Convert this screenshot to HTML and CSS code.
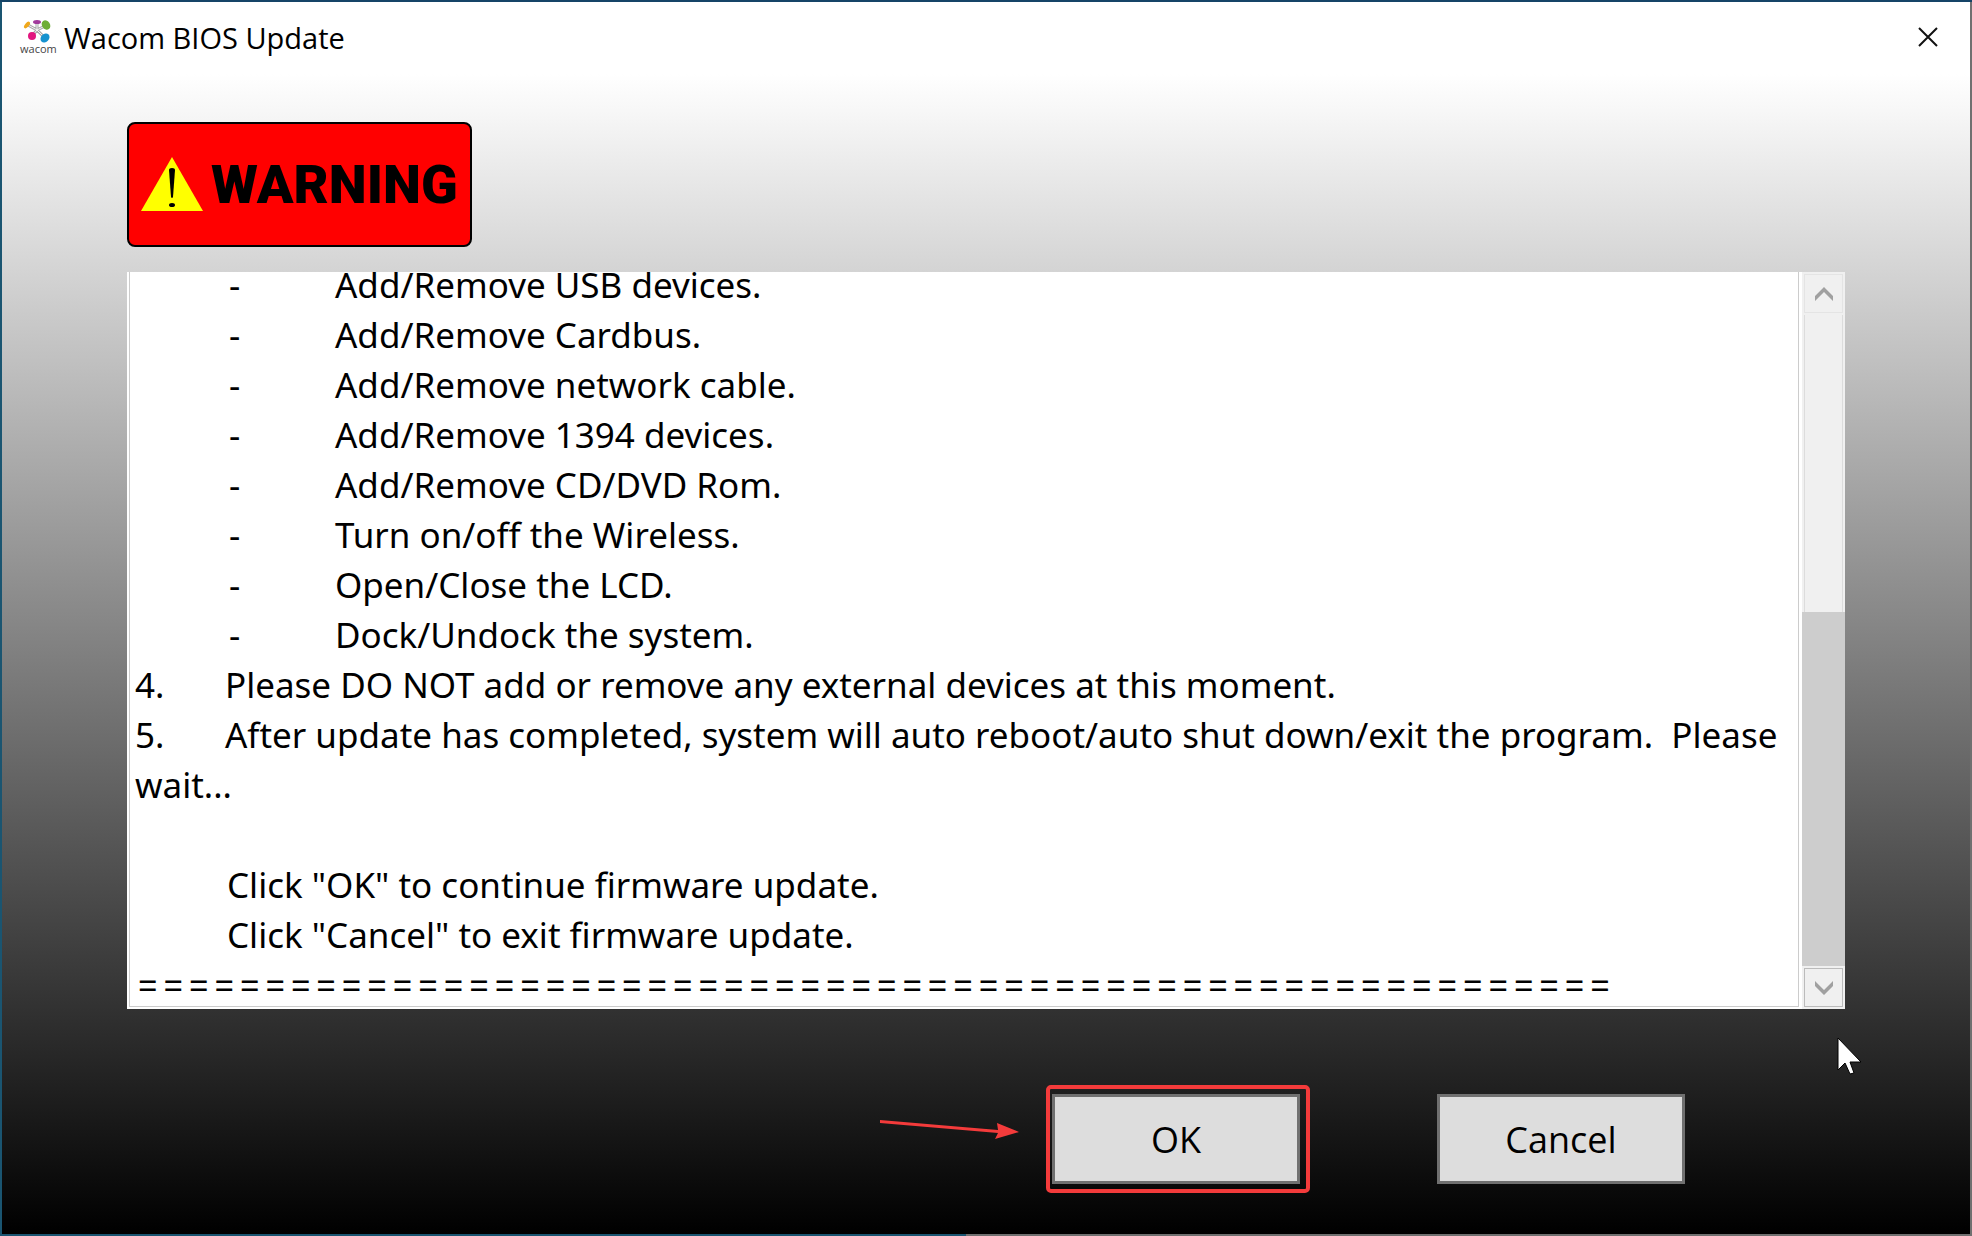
FILE: index.html
```html
<!DOCTYPE html>
<html lang="en">
<head>
  <meta charset="UTF-8">
  <meta name="viewport" content="width=device-width, initial-scale=1.0">
  <title>Wacom BIOS Update</title>
  <link rel="stylesheet" href="styles.css">
</head>
<body>
  <div class="window">
    <header class="title-bar">
      <svg class="logo" viewBox="0 0 36 36" aria-hidden="true">
        <g stroke="#a9a9a9" stroke-width="3" stroke-linecap="round">
          <path d="M17 11L8 6M17 11L17 4M17 11L25 7M17 11L12 17M17 11L24 18"/>
        </g>
        <g stroke="#f4f4f4" stroke-width="1" stroke-linecap="round">
          <path d="M17 11L8 6M17 11L17 4M17 11L25 7M17 11L12 17M17 11L24 18"/>
        </g>
        <ellipse cx="7" cy="6" rx="2" ry="4" transform="rotate(40 7 6)" fill="#f0a81c"/>
        <ellipse cx="17" cy="3" rx="4" ry="2" fill="#a13a9c"/>
        <ellipse cx="26" cy="6" rx="4" ry="5" transform="rotate(-35 26 6)" fill="#6fae35"/>
        <circle cx="12" cy="17" r="4" fill="#e2177f"/>
        <ellipse cx="25" cy="19" rx="4" ry="5" transform="rotate(45 25 19)" fill="#1592cf"/>
        <text x="0" y="34" class="logo-text">wacom</text>
      </svg>
      <h1>Wacom BIOS Update</h1>
      <button class="close" aria-label="Close">
        <svg viewBox="0 0 20 20"><path d="M1 1L19 19M19 1L1 19"/></svg>
      </button>
    </header>

    <main>
      <div class="warning">
        <svg viewBox="0 0 62 55" aria-hidden="true">
          <path d="M31 0L62 54H0Z" fill="#ff0"/>
          <path d="M28 13Q28 11 31 11T34 13L32 40Q31 42 30 40Z"/>
          <ellipse cx="31" cy="48" rx="3" ry="2"/>
        </svg>
        <strong>WARNING</strong>
      </div>

      <div class="notice">
        <div class="notice-text" tabindex="0">
          <ul>
            <li>Add/Remove USB devices.</li>
            <li>Add/Remove Cardbus.</li>
            <li>Add/Remove network cable.</li>
            <li>Add/Remove 1394 devices.</li>
            <li>Add/Remove CD/DVD Rom.</li>
            <li>Turn on/off the Wireless.</li>
            <li>Open/Close the LCD.</li>
            <li>Dock/Undock the system.</li>
          </ul>
          <p><span class="num">4.</span>Please DO NOT add or remove any external devices at this moment.</p>
          <p><span class="num">5.</span>After update has completed, system will auto reboot/auto shut down/exit the program.&nbsp; Please wait...</p>
          <p class="choices">Click "OK" to continue firmware update.<br>Click "Cancel" to exit firmware update.</p>
          <p class="rule">==========================================================</p>
        </div>
        <div class="scrollbar">
          <button aria-label="Scroll up"><svg viewBox="0 0 18 14"><path d="M0 14V9L9 0L18 9V14L9 5Z"/></svg></button>
          <div class="track"></div>
          <div class="thumb"></div>
          <button class="down" aria-label="Scroll down"><svg viewBox="0 0 18 14"><path d="M0 0V5L9 14L18 5V0L9 9Z"/></svg></button>
        </div>
      </div>

      <div class="actions">
        <div class="highlight">
          <button>OK</button>
          <svg class="arrow" viewBox="0 0 140 20" aria-hidden="true">
            <path d="M0 1L118 11L117 4L139 13L115 20L118 14L0 4Z"/>
          </svg>
        </div>
        <button>Cancel</button>
      </div>
    </main>
  </div>

  <svg class="cursor" viewBox="0 0 26 38" aria-hidden="true">
    <path d="M1 1V33L8 26L13 37L17 36L13 25H24Z"/>
  </svg>
</body>
</html>
```
FILE: styles.css
```css
* { box-sizing: border-box; }
body {
  margin: 0;
  padding: 0 2px 2px;
  height: 100vh;
  overflow: hidden;
  position: relative;
  font-family: "Noto Sans", "Open Sans", sans-serif;
  color: #000;
  border-top: 2px solid #154467;
  background: linear-gradient(to right, #1a5571 49%, #707070 49%);
}
.window {
  height: 100%;
  display: flex;
  flex-direction: column;
  background: linear-gradient(#fff 72px, #000);
}
.title-bar { display: flex; align-items: center; height: 70px; padding: 0 32px 0 18px; }
.logo { width: 36px; height: 36px; overflow: visible; }
.logo-text { font: 11px "Open Sans", sans-serif; fill: #444; }
h1 { flex: 1; margin: 0 0 0 8px; font: 29px "Open Sans", sans-serif; }
.close { padding: 0; border: none; background: none; }
.close svg { display: block; width: 20px; height: 20px; stroke: #111; stroke-width: 2; fill: none; }

main { flex: 1; min-height: 0; display: flex; flex-direction: column; padding: 50px 125px 41px; }
.warning {
  align-self: flex-start;
  display: flex;
  align-items: center;
  gap: 8px;
  width: 345px;
  height: 125px;
  padding: 0 12px;
  border: 2px solid #000;
  border-radius: 8px;
  background: #f00;
}
.warning svg { width: 62px; height: 55px; flex: none; }
.warning strong { font: 900 54px Roboto, "Liberation Sans", sans-serif; }

.notice { flex: 1; min-height: 0; display: flex; margin-top: 25px; background: #fff; }
.notice-text {
  flex: 1;
  display: flex;
  flex-direction: column;
  justify-content: flex-end;
  overflow: hidden;
  margin: 0 3px 2px 2px;
  padding: 0 8px 0 5px;
  border: 1px solid #ccc;
  border-top: none;
  font-size: 35px;
  line-height: 50px;
}
.notice ul { list-style: none; margin: 0; padding: 0 0 0 94px; }
.notice li::before { content: "-"; display: inline-block; width: 106px; }
.notice p { margin: 0; }
.num { display: inline-block; width: 90px; }
.notice .choices { padding: 50px 0 0 92px; }
.notice .rule { font-family: Inter, sans-serif; font-size: 39px; font-weight: 300; line-height: 46px; }

.scrollbar { width: 43px; display: flex; flex-direction: column; background: #f0f0f0; }
.scrollbar button { height: 39px; margin: 2px; padding: 0; border: 1px solid #e4e4e4; background: #f0f0f0; }
.scrollbar .down { border-color: #bbb; }
.scrollbar svg { display: block; width: 18px; height: 14px; margin: auto; fill: #a0a0a0; }
.track { flex: 297; margin: 0 2px; border: solid #dcdcdc; border-width: 0 1px; }
.thumb { flex: 355; background: #cdcdcd; }

.actions { display: flex; justify-content: flex-end; align-items: center; gap: 127px; margin-top: 76px; padding-right: 160px; }
.actions button {
  display: block;
  width: 248px;
  height: 90px;
  border: 3px solid #707070;
  background: #ddd;
  color: #000;
  font: 36px "Open Sans", "Noto Sans", sans-serif;
}
.highlight { position: relative; padding: 5px 6px 5px 2px; border: 4px solid #f43b3b; border-radius: 5px; }
.arrow { position: absolute; right: 286px; top: 30px; width: 140px; height: 20px; fill: #f43b3b; }
.cursor { position: absolute; left: 1837px; top: 1035px; width: 26px; height: 38px; fill: #fff; stroke: #000; stroke-width: 1; }
```
